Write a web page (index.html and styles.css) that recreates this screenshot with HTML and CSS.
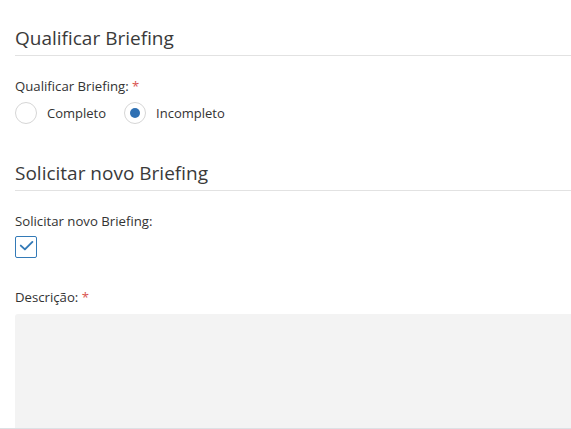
FILE: index.html
```html
<!DOCTYPE html>
<html lang="pt">
<head>
<meta charset="utf-8">
<link rel="stylesheet" href="styles.css">
</head>
<body>
<div class="form">
  <h2 class="section-title first">Qualificar Briefing</h2>
  <div class="field">
    <div class="field-label">Qualificar Briefing: <span class="req">*</span></div>
    <div class="radio-group">
      <label class="radio"><span class="radio-circle"></span>Completo</label>
      <label class="radio"><span class="radio-circle checked"></span>Incompleto</label>
    </div>
  </div>

  <h2 class="section-title second">Solicitar novo Briefing</h2>
  <div class="field">
    <div class="field-label">Solicitar novo Briefing:</div>
    <span class="checkbox">
      <svg viewBox="0 0 22 22" width="22" height="22"><path d="M5.8 9.6 L9.9 13.4 L17.4 5.9" fill="none" stroke="#337ab7" stroke-width="1.9" stroke-linecap="round" stroke-linejoin="round"/></svg>
    </span>
  </div>

  <div class="field desc">
    <div class="field-label">Descrição: <span class="req">*</span></div>
    <div class="textarea"></div>
  </div>
</div>
<div class="footer-line"></div>
</body>
</html>
```
FILE: styles.css
```css
html, body {
  margin: 0;
  padding: 0;
  background: #fff;
  overflow: hidden;
}
body {
  font-family: "Open Sans", "Noto Sans", sans-serif;
  color: #333;
  width: 571px;
  height: 429px;
}
.form {
  padding-left: 15px;
}
.section-title {
  font-size: 19px;
  font-weight: 400;
  line-height: 28px;
  margin: 0;
  padding-bottom: 3px;
  border-bottom: 1px solid #e2e2e2;
  color: #3a3a3a;
}
.section-title.first { margin-top: 24px; }
.section-title.second { margin-top: 35px; }
.field-label {
  font-size: 13.2px;
  line-height: 20px;
  margin-top: 20px;
}
.req { color: #d9534f; }
.radio-group {
  display: flex;
  gap: 18px;
  margin-top: 6px;
}
.radio {
  display: flex;
  align-items: center;
  gap: 10px;
  font-size: 13px;
  line-height: 22px;
}
.radio-circle {
  width: 20px;
  height: 20px;
  border: 1px solid #d6d6d6;
  border-radius: 50%;
  display: flex;
  align-items: center;
  justify-content: center;
}
.radio-circle.checked::after {
  content: "";
  width: 10px;
  height: 10px;
  border-radius: 50%;
  background: #2f70b3;
}
.checkbox {
  display: block;
  width: 20px;
  height: 20px;
  margin-top: 5px;
  border: 1px solid #337ab7;
  border-radius: 2px;
}
.checkbox svg {
  display: block;
  margin: -1px;
}
.desc .field-label { margin-top: 29px; }
.textarea {
  margin-top: 7px;
  height: 114px;
  background: #f3f3f3;
  border-radius: 3px 0 0 0;
}
.footer-line {
  height: 1px;
  background: #dde0e4;
}
```
